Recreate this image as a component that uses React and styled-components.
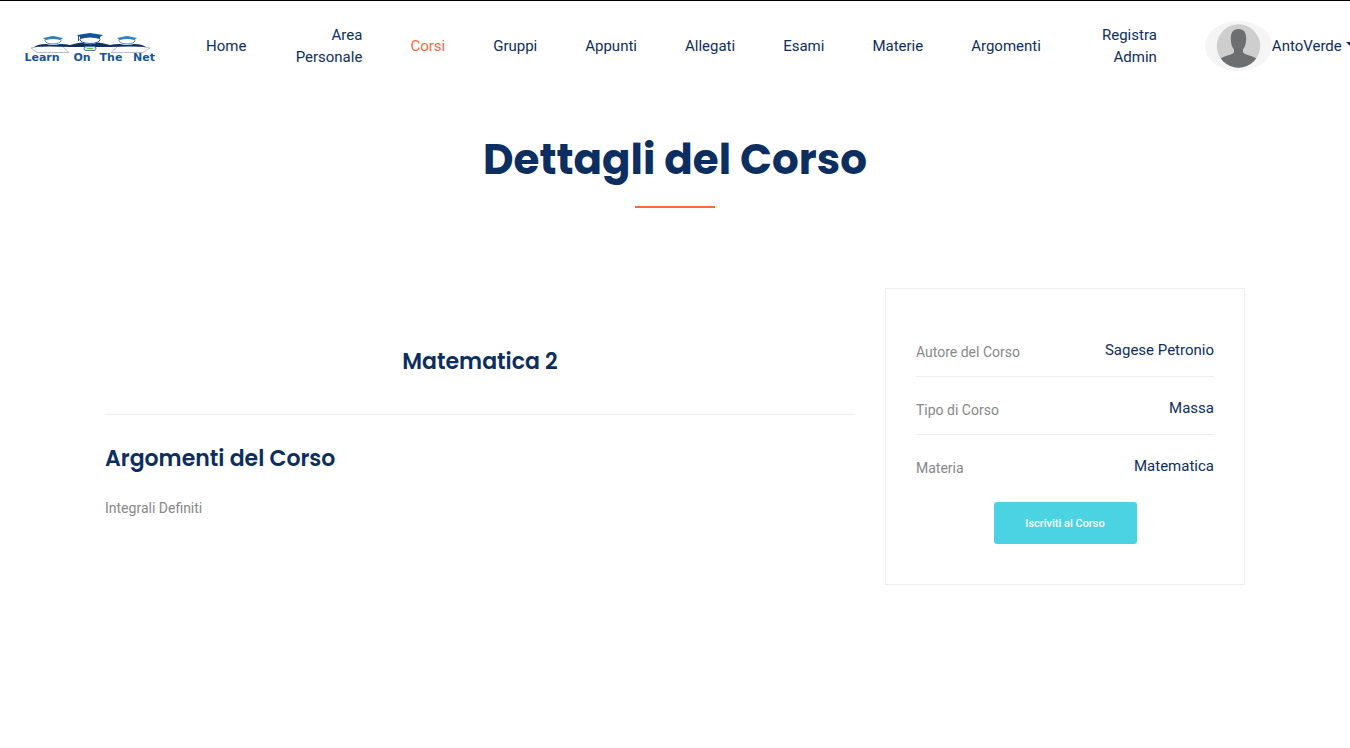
import React from "react";
import styled, { createGlobalStyle } from "styled-components";

const GlobalStyle = createGlobalStyle`
  *, *::before, *::after { box-sizing: border-box; }
  body {
    margin: 0;
    background: #fff;
    color: #888;
    font-family: Roboto, "Liberation Sans", sans-serif;
    font-size: 14px;
    line-height: 24px;
    overflow-x: hidden;
  }
  h1, h2, h3, p, ul, dl, dd { margin: 0; padding: 0; }
`;

const Header = styled.header`
  display: flex;
  align-items: center;
  gap: 48px;
  min-height: 90px;
  padding-left: 20px;
  border-top: 1px solid #000;
  overflow: hidden;
`;

const LogoLink = styled.a`
  display: block;
  flex: none;
  width: 138px;
  height: 40px;
`;

const NavList = styled.ul`
  display: flex;
  align-items: center;
  gap: 48px;
  flex: none;
  list-style: none;
`;

const NavItem = styled.li`
  width: ${(p) => (p.$wraps ? "68px" : "auto")};
  text-align: right;
`;

const NavLink = styled.a`
  display: block;
  color: ${(p) => (p.$active ? "#ff663b" : "#0c2e60")};
  font-size: 15px;
  line-height: 22px;
  text-decoration: none;
`;

const UserButton = styled.button`
  display: flex;
  align-items: center;
  flex: none;
  padding: 0;
  border: 0;
  background: none;
  color: #0c2e60;
  font: inherit;
  font-size: 15px;
  line-height: 22px;
  cursor: pointer;
`;

const Caret = styled.span`
  margin: 0 0 3px 4px;
  border: 4px solid transparent;
  border-top-color: #0c2e60;
  border-bottom: 0;
`;

const Main = styled.main`
  max-width: 1170px;
  margin: 0 auto;
  padding: 40px 15px 80px;
`;

const Title = styled.h1`
  color: #0c2e60;
  font-family: Poppins, Inter, sans-serif;
  font-size: 42px;
  font-weight: 700;
  line-height: 60px;
  text-align: center;

  &::after {
    content: "";
    display: block;
    width: 80px;
    height: 2px;
    margin: 16px auto 0;
    background: #ff663b;
  }
`;

const Columns = styled.div`
  display: grid;
  grid-template-columns: minmax(0, 1fr) 360px;
  align-items: start;
  gap: 30px;
  margin-top: 80px;
`;

const Course = styled.section`
  padding-top: 60px;
`;

const Heading = styled.h2`
  color: #0c2e60;
  font-family: Poppins, Inter, sans-serif;
  font-size: 22px;
  font-weight: 600;
  line-height: 28px;
  text-align: ${(p) => (p.$centered ? "center" : "left")};
`;

const Divider = styled.hr`
  margin: 38px 0 30px;
  border: 0;
  border-top: 1px solid #eee;
`;

const Topic = styled.p`
  margin-top: 23px;
`;

const Card = styled.aside`
  padding: 49px 30px 40px;
  border: 1px solid #eee;
`;

const Detail = styled.div`
  display: flex;
  justify-content: space-between;
  height: 39px;
  margin-bottom: 19px;
  border-bottom: ${(p) => (p.$last ? "0" : "1px solid #eee")};
`;

const Label = styled.dt`
  padding-top: 2px;
`;

const Value = styled.dd`
  color: #0c2e60;
  font-size: 15px;
`;

const EnrollButton = styled.button`
  display: block;
  width: 143px;
  height: 42px;
  margin: -10px auto 0;
  padding: 0;
  border: 0;
  border-radius: 3px;
  background: #4cd3e3;
  color: #fff;
  font-family: inherit;
  font-size: 11px;
  font-weight: 500;
  cursor: pointer;
`;

const LogoText = styled.text`
  fill: #17559b;
  font-family: "DejaVu Sans", sans-serif;
  font-size: 11px;
  font-weight: 700;
  text-anchor: middle;
`;

const Logo = () => (
  <svg width="138" height="40" viewBox="-2 -4 138 40" role="img" aria-label="Learn On The Net">
    <path d="M14 17 L9 18 L15 22.500 H47 L41 17 M122 17 L128 18 L121 22.500 H89 L95 17" fill="none" stroke="#b4bccd" />
    <path d="M12 17 Q16 14 24 14 Q31 16 38 14 Q44 14 48 15 Q54 13 60 12.500 Q68 16 76 12.500 Q82 13 88 15 Q92 14 98 14 Q105 16 112 14 Q120 14 124 17 Q110 16 88 17 H48 Q26 16 12 17Z" fill="#12305f" />
    <g fill="#fff" stroke="#4a8fcd">
      <ellipse cx="31" cy="10.500" rx="8" ry="3.500" />
      <ellipse cx="105" cy="10.500" rx="8" ry="3.500" />
      <ellipse cx="68" cy="9.500" rx="10" ry="4" stroke="#1b63a6" />
    </g>
    <path d="M21 8 L31 6 41 8 38 10 Q31 8 24 10Z M95 8 L105 6 115 8 112 10 Q105 8 98 10Z" fill="#3181c5" />
    <path d="M55 5 L68 3 81 5 78 7 V9 Q68 6 58 9 V7Z" fill="#125295" />
    <path d="M56.500 5 V11" stroke="#125295" />
    <rect x="62" y="16.500" width="12" height="4" rx="2" fill="#d7e5ef" stroke="#537eaa" />
    <rect x="65" y="18" width="6" height="1" fill="#7abf3d" />
    <LogoText x="20" y="31">Learn</LogoText>
    <LogoText x="60" y="31">On</LogoText>
    <LogoText x="89" y="31">The</LogoText>
    <LogoText x="122" y="31">Net</LogoText>
  </svg>
);

const Avatar = () => (
  <svg width="67" height="50" viewBox="0 0 67 50" aria-hidden="true">
    <defs>
      <clipPath id="avatar-disc">
        <circle cx="33.500" cy="25" r="21.700" />
      </clipPath>
    </defs>
    <ellipse cx="33.500" cy="25" rx="33.500" ry="25" fill="#f5f5f5" />
    <g clipPath="url(#avatar-disc)">
      <rect width="67" height="50" fill="#cecece" />
      <path
        d="M33.500 8 C28 8 25.600 12 25.800 18 C26 23 27 26 29 28.500 V31 C29 34 19 34 14 39 V50 H53 V39 C48 34 38 34 38 31 V28.500 C40 26 41 23 41.200 18 C41.400 12 39 8 33.500 8Z"
        fill="#6d6e70"
      />
    </g>
  </svg>
);

const navItems = [
  { label: "Home" },
  { label: "Area Personale", wraps: true },
  { label: "Corsi", active: true },
  { label: "Gruppi" },
  { label: "Appunti" },
  { label: "Allegati" },
  { label: "Esami" },
  { label: "Materie" },
  { label: "Argomenti" },
  { label: "Registra Admin", wraps: true },
];

const details = [
  { label: "Autore del Corso", value: "Sagese Petronio" },
  { label: "Tipo di Corso", value: "Massa" },
  { label: "Materia", value: "Matematica" },
];

export default function App() {
  return (
    <>
      <GlobalStyle />
      <Header>
        <LogoLink href="#home">
          <Logo />
        </LogoLink>
        <nav>
          <NavList>
            {navItems.map((item) => (
              <NavItem key={item.label} $wraps={item.wraps}>
                <NavLink href="#" $active={item.active}>
                  {item.label}
                </NavLink>
              </NavItem>
            ))}
          </NavList>
        </nav>
        <UserButton type="button">
          <Avatar />
          AntoVerde
          <Caret />
        </UserButton>
      </Header>
      <Main>
        <Title>Dettagli del Corso</Title>
        <Columns>
          <Course>
            <Heading $centered>Matematica 2</Heading>
            <Divider />
            <Heading>Argomenti del Corso</Heading>
            <Topic>Integrali Definiti</Topic>
          </Course>
          <Card>
            <dl>
              {details.map((d, i) => (
                <Detail key={d.label} $last={i === details.length - 1}>
                  <Label>{d.label}</Label>
                  <Value>{d.value}</Value>
                </Detail>
              ))}
            </dl>
            <EnrollButton type="button">Iscriviti al Corso</EnrollButton>
          </Card>
        </Columns>
      </Main>
    </>
  );
}
